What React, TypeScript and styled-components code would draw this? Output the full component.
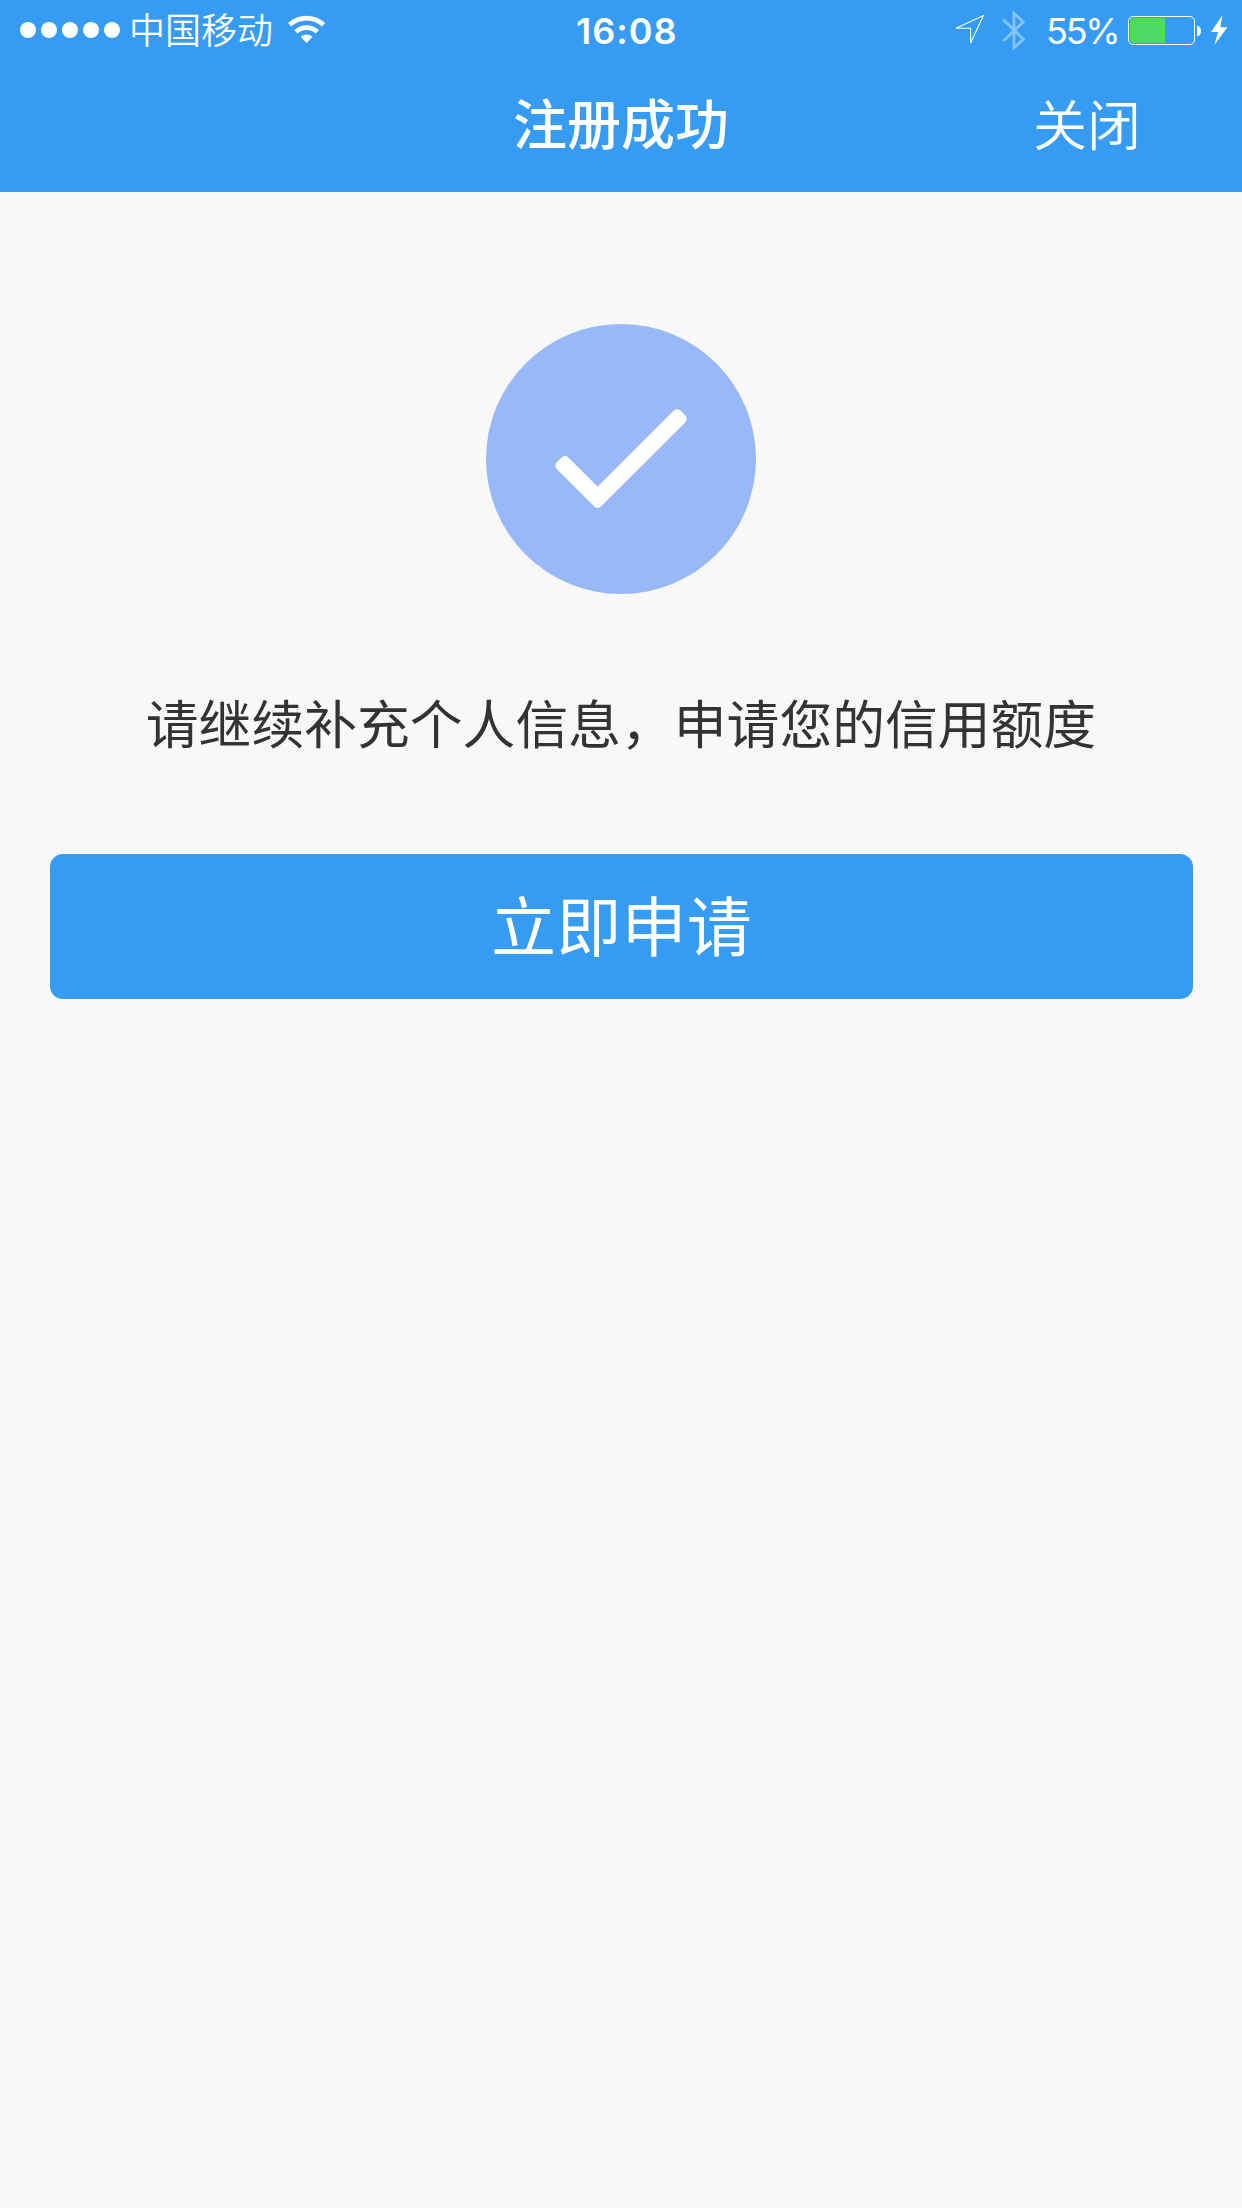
import React from 'react';
import styled, { createGlobalStyle } from 'styled-components';

const cjk = `'Noto Sans CJK SC', sans-serif`;
const blue = '#359bf3';

const GlobalStyle = createGlobalStyle`
  *, *::before, *::after { box-sizing: border-box; }
  body { margin: 0; background: #f8f8f8; }
`;

const Screen = styled.div`
  width: 1242px;
  min-height: 2208px;
  display: flex;
  flex-direction: column;
  background: #f8f8f8;
  font-family: ${cjk};
`;

const Header = styled.header`
  height: 192px;
  background: ${blue};
  color: #fff;
`;

const StatusBar = styled.div`
  height: 60px;
  display: grid;
  grid-template-columns: 576px 100px 1fr;
`;

const StatusGroup = styled.div<{ $start: number }>`
  display: flex;
  align-items: flex-start;
  padding-left: ${(p) => p.$start}px;
`;

const Dots = styled.div`
  display: flex;
  gap: 5px;
  margin-top: 22px;
`;

const Dot = styled.span`
  width: 16px;
  height: 16px;
  border-radius: 50%;
  background: #fff;
`;

const Carrier = styled.span`
  width: 146px;
  margin: 0 13px 0 9px;
  font-size: 36px;
  font-weight: 350;
  line-height: 57px;
  white-space: nowrap;
`;

const Clock = styled.time`
  font-family: Inter, sans-serif;
  font-size: 36px;
  font-weight: 600;
  line-height: 62px;
  letter-spacing: 1px;
  white-space: nowrap;
`;

const Percent = styled.span`
  width: 82px;
  font-family: Inter, sans-serif;
  font-size: 36px;
  font-weight: 400;
  line-height: 62px;
  letter-spacing: -2.2px;
  white-space: nowrap;
`;

const Icon = styled.svg<{ $top: number; $gap?: number }>`
  display: block;
  flex: none;
  margin-top: ${(p) => p.$top}px;
  margin-right: ${(p) => p.$gap ?? 0}px;
`;

const Battery = styled.div`
  width: 67px;
  height: 29px;
  margin: 16px 2px 0 0;
  padding: 1px;
  border: 1px solid #fff;
  border-radius: 5px;
`;

const Charge = styled.div`
  width: 35px;
  height: 25px;
  border-radius: 3px 0 0 3px;
  background: #4cd964;
`;

const NavBar = styled.div`
  height: 132px;
  display: grid;
  grid-template-columns: 1fr 216px 1fr;
`;

const Title = styled.h1`
  grid-column: 2;
  margin: 0;
  font-size: 54px;
  font-weight: 500;
  line-height: 124px;
  white-space: nowrap;
`;

const CloseButton = styled.button`
  align-self: start;
  justify-self: end;
  margin-right: 101px;
  padding: 0;
  border: 0;
  background: none;
  color: #fff;
  font-family: ${cjk};
  font-size: 54px;
  font-weight: 350;
  line-height: 126px;
`;

const Content = styled.main`
  display: flex;
  flex-direction: column;
  align-items: center;
  padding: 132px 49px 0 50px;
`;

const Message = styled.p`
  margin: 82px 1px 88px 0;
  color: #333;
  font-size: 52.8px;
  font-weight: 400;
  line-height: 90px;
  white-space: nowrap;
`;

const ApplyButton = styled.button`
  align-self: stretch;
  height: 145px;
  padding: 0 0 6px;
  border: 0;
  border-radius: 13px;
  background: ${blue};
  color: #fff;
  font-family: ${cjk};
  font-size: 65px;
  font-weight: 400;
  line-height: 139px;
  letter-spacing: 0.3px;
`;

export default function App() {
  return (
    <Screen>
      <GlobalStyle />
      <Header>
        <StatusBar>
          <StatusGroup $start={20}>
            <Dots>
              {[0, 1, 2, 3, 4].map((n) => (
                <Dot key={n} />
              ))}
            </Dots>
            <Carrier>中国移动</Carrier>
            <Icon $top={15} width="38" height="29" viewBox="0 0 38 29">
              <path d="M1.6 9.8 C11.5 0.9 25.7 0.9 35.6 9.8" fill="none" stroke="#fff" strokeWidth="4.6" />
              <path d="M7.8 16.8 C14 11.2 23.2 11.2 29.4 16.8" fill="none" stroke="#fff" strokeWidth="4.6" />
              <path d="M12.8 22 C16.3 18.8 20.9 18.8 24.4 22 L18.6 28 Z" fill="#fff" />
            </Icon>
          </StatusGroup>
          <Clock>16:08</Clock>
          <StatusGroup $start={278}>
            <Icon $top={14} $gap={16} width="32" height="32" viewBox="0 0 32 32">
              <path d="M2 14.3 L29.4 1.6 L16.6 29 V14.3 Z" fill="none" stroke="#fff" strokeWidth="1.1" />
            </Icon>
            <Icon $top={9} $gap={19} width="25" height="43" viewBox="0 0 25 43">
              <path
                d="M1.3 10.5 L21.3 30.3 L12 38.8 V4.2 L21.3 13 L1.3 32"
                fill="none"
                stroke="#86c3f9"
                strokeWidth="2.8"
              />
            </Icon>
            <Percent>55%</Percent>
            <Battery>
              <Charge />
            </Battery>
            <Icon $top={25} $gap={10} width="4" height="12" viewBox="0 0 4 12">
              <path d="M0 0.5 Q4 1.5 4 6 T0 11.5 Z" fill="#fff" />
            </Icon>
            <Icon $top={15} width="17" height="30" viewBox="0 0 17 30">
              <path d="M11.5 0 L0 17 H7 L3.3 30 L16.5 12.3 H9.4 Z" fill="#fff" />
            </Icon>
          </StatusGroup>
        </StatusBar>
        <NavBar>
          <Title>注册成功</Title>
          <CloseButton>关闭</CloseButton>
        </NavBar>
      </Header>
      <Content>
        <Icon $top={0} $gap={1} width="270" height="270" viewBox="0 0 270 270">
          <circle cx="135" cy="135" r="135" fill="#99b8f8" />
          <path
            d="M79 136.74 L74.07 141.67 L111.67 179.27 L196.1 94.84 L191.17 89.9 L111.67 169.4 Z"
            fill="#fff"
            stroke="#fff"
            strokeWidth="9.4"
            strokeLinejoin="round"
          />
        </Icon>
        <Message>请继续补充个人信息，申请您的信用额度</Message>
        <ApplyButton>立即申请</ApplyButton>
      </Content>
    </Screen>
  );
}
